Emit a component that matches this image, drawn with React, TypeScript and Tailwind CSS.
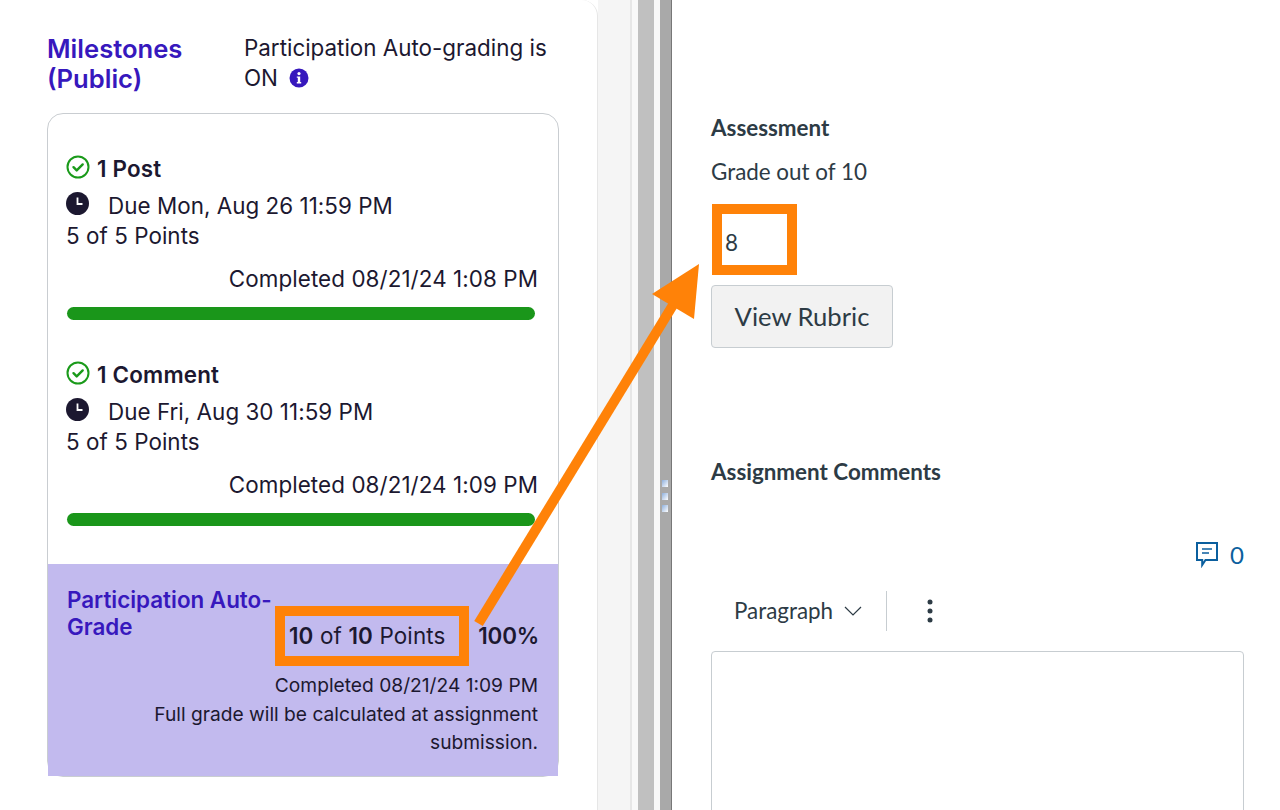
const inter = 'font-["Inter",sans-serif]'

function CheckCircle() {
  return (
    <svg width="24" height="24" viewBox="0 0 24 24" fill="none" stroke="#1a9a1a" strokeWidth="2" className="shrink-0">
      <circle cx="12" cy="12" r="10.5" />
      <path d="M7.5 12.2l3.2 3.2 6-6" strokeLinecap="round" strokeLinejoin="round" strokeWidth="2.4" />
    </svg>
  )
}

function Clock() {
  return (
    <svg width="23" height="23" viewBox="0 0 23 23" className="mb-[5px] shrink-0">
      <circle cx="11.5" cy="11.5" r="11.5" fill="#1c1830" />
      <path d="M11.5 5.5v6.5h5" fill="none" stroke="#fff" strokeWidth="1.8" />
    </svg>
  )
}

function Milestone({ title, due, completed }: { title: string; due: string; completed: string }) {
  return (
    <div className="text-[22.4px] text-[#1c1830]">
      <div className="flex h-[24px] items-start gap-[7px] font-semibold">
        <CheckCircle />
        <span className="leading-[28px] tracking-[0.2px]">{title}</span>
      </div>
      <div className="mt-[12px] flex h-[30px] items-center">
        <Clock />
        <span className="ml-[19px] tracking-[0.04px]">{due}</span>
      </div>
      <div className="h-[30px] leading-[30px] tracking-[0.05px]">5 of 5 Points</div>
      <div className="mt-[13px] text-right leading-[30px] tracking-[0.08px]">Completed {completed}</div>
      <div className="mt-[13px] ml-[1px] mr-[3px] h-[13px] rounded-full bg-[#1a961a]" />
    </div>
  )
}

export default function App() {
  return (
    <div className="relative flex h-[810px] w-[1280px] overflow-hidden bg-white">
      {/* Left column */}
      <div className={`w-[598px] shrink-0 rounded-tr-[16px] border-r border-[#e6e6e6] bg-white pl-[47px] pr-[38px] pt-[33px] ${inter}`}>
        <div className="flex">
          <h2 className="mt-[1px] w-[197px] shrink-0 text-[25.6px] leading-[30px] font-semibold text-[#3718bd]">Milestones (Public)</h2>
          <p className="text-[22.4px] leading-[30px] text-[#1c1830]">
            Participation Auto-grading is ON
            <svg width="20" height="20" viewBox="0 0 20 20" className="ml-[11px] inline-block align-[-2px]">
              <circle cx="10" cy="10" r="9.5" fill="#3718bd" />
              <circle cx="10" cy="5.6" r="1.6" fill="#fff" />
              <path d="M7.8 8.4h3.4v5.6h1v1.4H7.8V14h1v-4.2h-1z" fill="#fff" />
            </svg>
          </p>
        </div>
        <div className="mt-[19px] h-[664px] rounded-[16px] border border-[#c9cdd1]">
          <div className="flex flex-col gap-[41px] pl-[18px] pr-[20px] pt-[41px] pb-[38px]">
            <Milestone title="1 Post" due="Due Mon, Aug 26 11:59 PM" completed="08/21/24 1:08 PM" />
            <Milestone title="1 Comment" due="Due Fri, Aug 30 11:59 PM" completed="08/21/24 1:09 PM" />
          </div>
          <div className="h-[212px] bg-[#c2baee] pl-[19px] pr-[20px] pt-[22px]">
            <div className="flex">
              <div className="w-[212px] shrink-0 text-[22.4px] leading-[27px] font-semibold text-[#3718bd]">Participation Auto-Grade</div>
              <div className="flex flex-1 justify-between pl-[10px] pt-[35px] text-[22.4px] leading-[30px] text-[#1c1830]">
                <span className="tracking-[0.15px]"><b className="font-semibold">10</b> of <b className="font-semibold">10</b> Points</span>
                <b className="mr-[-1px] font-semibold tracking-[-0.2px]">100%</b>
              </div>
            </div>
            <div className="mt-[20px] text-right text-[19.2px] leading-[28.5px] text-[#1c1830]">
              Completed 08/21/24 1:09 PM
              <br />
              Full grade will be calculated at assignment
              <br />
              submission.
            </div>
          </div>
        </div>
      </div>

      {/* Splitter gutter */}
      <div className="w-[34px] shrink-0 border-r-2 border-[#e6e6e6] bg-[#f5f5f5]" />
      <div className="w-[6px] shrink-0 bg-[#f8f8f8]" />
      <div className="w-[16px] shrink-0 bg-[#c0c0c0]" />
      <div className="w-[6px] shrink-0 bg-[#f8f8f8]" />
      <div className="flex w-[12px] shrink-0 flex-col gap-[5.5px] border-r border-[#777] bg-[#a9a9a9] pl-[2px] pt-[480px]">
        <div className="h-[7px] w-[6px] bg-gradient-to-br from-[#8fb0dc] to-white" />
        <div className="h-[7px] w-[6px] bg-gradient-to-br from-[#8fb0dc] to-white" />
        <div className="h-[7px] w-[6px] bg-gradient-to-br from-[#8fb0dc] to-white" />
      </div>

      {/* Right column */}
      <div className={`flex-1 pl-[39px] pr-[36px] pt-[114px] text-[#2d3b45] font-["Lato",sans-serif]`}>
        <h3 className="text-[22.4px] leading-[27px] font-bold">Assessment</h3>
        <p className="mt-[17px] text-[22.4px] leading-[27px]">Grade out of 10</p>
        <div className="mt-[19px] flex h-[70px] w-[86px] items-center pl-[14px] pt-[8px] text-[22.4px]">8</div>
        <button className="mt-[11px] block h-[63px] w-[182px] rounded-[4px] border border-[#c7cdd1] bg-[#f2f2f2] text-[25.6px] text-[#2d3b45]">
          View Rubric
        </button>
        <h3 className="mt-[110px] text-[22.4px] leading-[27px] font-bold">Assignment Comments</h3>
        <div className="mt-[57px] flex items-center justify-end gap-[12px] text-[24px] leading-[26px] text-[#0b5f9e]">
          <svg width="22" height="26" viewBox="0 0 22 26" fill="none" stroke="#0b5f9e" strokeWidth="2">
            <path d="M1 1h20v17H9.5L6.2 23v-5H1z" />
            <path d="M6 7h10M6 11h7" strokeWidth="1.6" />
          </svg>
          <span>0</span>
        </div>
        <div className="mt-[24px] flex h-[38px] items-center pl-[23px] text-[22.4px]">
          <span>Paragraph</span>
          <svg width="18" height="10" viewBox="0 0 18 10" fill="none" stroke="#2d3b45" strokeWidth="1.2" className="ml-[11px]">
            <path d="M1 1l8 8 8-8" />
          </svg>
          <div className="ml-[24px] h-[40px] w-px shrink-0 bg-[#c7cdd1]" />
          <svg width="6" height="24" viewBox="0 0 6 24" fill="#2d3b45" className="ml-[40px]">
            <circle cx="3" cy="3" r="2.5" />
            <circle cx="3" cy="12" r="2.5" />
            <circle cx="3" cy="21" r="2.5" />
          </svg>
        </div>
        <div className="mt-[21px] h-[200px] rounded-t-[4px] border border-[#c7cdd1]" />
      </div>

      {/* Annotations */}
      <div className="absolute left-[712px] top-[204px] h-[71px] w-[85px] border-[10px] border-[#ff8208]" />
      <div className="absolute left-[275px] top-[606px] h-[60px] w-[194px] border-[10px] border-[#ff8208]" />
      <svg width="1280" height="810" className="pointer-events-none absolute left-0 top-0">
        <path d="M478.5 623.5L673 305" stroke="#ff8208" strokeWidth="10" />
        <path d="M699 264L652 294L694 319z" fill="#ff8208" />
      </svg>
    </div>
  )
}
